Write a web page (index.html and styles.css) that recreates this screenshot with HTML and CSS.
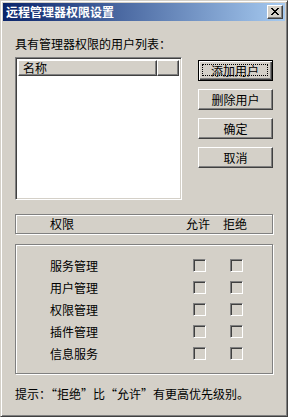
FILE: index.html
```html
<!DOCTYPE html>
<html lang="zh">
<head>
    <meta charset="UTF-8">
    <title>远程管理器权限设置</title>
    <link rel="stylesheet" href="styles.css">
</head>
<body>
    <div class="window">
        <div class="titlebar">
            <span class="title">远程管理器权限设置</span>
            <span class="close">
                <svg width="8" height="7" viewBox="0 0 8 7">
                    <path d="M0 0h2v1h1v1h2v-1h1v-1h2v1h-1v1h-1v1h-1v1h1v1h1v1h1v1h-2v-1h-1v-1h-2v1h-1v1h-2v-1h1v-1h1v-1h1v-1h-1v-1h-1v-1h-1z" fill="#000"/>
                </svg>
            </span>
        </div>

        <div class="content">
            <div class="label">具有管理器权限的用户列表：</div>

            <div class="top-row">
                <!-- 用户列表 -->
                <div class="listview">
                    <div class="list-header">
                        <div class="col col-name">名称</div>
                        <div class="col col-rest"></div>
                    </div>
                </div>

                <!-- 右侧按钮 -->
                <div class="buttons">
                    <div class="btn default"><span class="focus">添加用户</span></div>
                    <div class="btn">删除用户</div>
                    <div class="btn">确定</div>
                    <div class="btn">取消</div>
                </div>
            </div>

            <div class="frame perm-header">
                <span>权限</span>
                <span>允许</span>
                <span>拒绝</span>
            </div>

            <div class="frame perm-list">
                <div class="perm-row"><span>服务管理</span><i class="check"></i><i class="check"></i></div>
                <div class="perm-row"><span>用户管理</span><i class="check"></i><i class="check"></i></div>
                <div class="perm-row"><span>权限管理</span><i class="check"></i><i class="check"></i></div>
                <div class="perm-row"><span>插件管理</span><i class="check"></i><i class="check"></i></div>
                <div class="perm-row"><span>信息服务</span><i class="check"></i><i class="check"></i></div>
            </div>

            <div class="hint">提示：“拒绝”比“允许”有更高优先级别。</div>
        </div>
    </div>
</body>
</html>
```

FILE: styles.css
```css
body {
    margin: 0;
    background-color: #d4d0c8;
    font-family: "Noto Sans CJK SC", "Liberation Sans", sans-serif;
    font-size: 12px;
    color: #000;
}
.window {
    width: 288px;
    height: 417px;
    box-sizing: border-box;
    border: 1px solid;
    border-color: #d4d0c8 #404040 #404040 #d4d0c8;
    box-shadow: inset 1px 1px #fff, inset -1px -1px #808080;
    padding: 2px;
    background: #d4d0c8;
}

/* 标题栏 */
.titlebar {
    height: 18px;
    display: flex;
    align-items: center;
    justify-content: space-between;
    padding: 0 2px 0 3px;
    background: linear-gradient(to right, #0a246a, #a6caf0);
}
.title {
    color: #fff;
    font-weight: bold;
    line-height: 18px;
}
.close {
    width: 16px;
    height: 14px;
    box-sizing: border-box;
    border: 1px solid;
    border-color: #fff #404040 #404040 #fff;
    box-shadow: inset -1px -1px #808080;
    background: #d4d0c8;
    display: flex;
    align-items: center;
    justify-content: center;
    padding: 0 1px 1px 0;
}
.close svg {
    display: block;
}

.content {
    padding: 16px 12px 0 12px;
}
.label {
    line-height: 14px;
}

.top-row {
    display: flex;
    margin-top: 6px;
}
.listview {
    width: 167px;
    height: 143px;
    box-sizing: border-box;
    border: 1px solid;
    border-color: #808080 #fff #fff #808080;
    box-shadow: inset 1px 1px #404040, inset -1px -1px #d4d0c8;
    background: #fff;
    padding: 2px;
}
.list-header {
    display: flex;
    height: 16px;
}
.col {
    box-sizing: border-box;
    height: 16px;
    background: #d4d0c8;
    border: 1px solid;
    border-color: #fff #404040 #404040 #fff;
    box-shadow: inset -1px -1px #808080;
    line-height: 13px;
}
.col-name {
    width: 139px;
    padding-left: 4px;
}
.col-rest {
    flex: 1;
}

.buttons {
    margin-left: 16px;
    margin-top: 3px;
    display: flex;
    flex-direction: column;
    gap: 8px;
}
.btn {
    width: 75px;
    height: 21px;
    box-sizing: border-box;
    border: 1px solid;
    border-color: #fff #404040 #404040 #fff;
    box-shadow: inset -1px -1px #808080;
    display: flex;
    align-items: center;
    justify-content: center;
    padding-bottom: 1px;
}
.btn.default {
    border-color: #000;
    box-shadow: inset 1px 1px #fff, inset -1px -1px #404040, inset -2px -2px #808080;
    padding: 3px 4px 4px 3px;
}
.focus {
    flex: 1;
    align-self: stretch;
    border: 1px dotted #000;
    display: flex;
    align-items: center;
    justify-content: center;
}

/* 权限框 */
.frame {
    box-sizing: border-box;
    width: 258px;
    border: 1px solid #808080;
    box-shadow: inset 1px 1px #fff, 1px 1px #fff;
}
.perm-header {
    margin-top: 14px;
    height: 20px;
    display: grid;
    grid-template-columns: 1fr 24px 24px;
    column-gap: 13px;
    align-items: center;
    padding: 0 25px 1px 34px;
}
.perm-list {
    margin-top: 10px;
    height: 130px;
    padding: 9px 0 0 34px;
}
.perm-row {
    height: 22px;
    display: grid;
    grid-template-columns: 1fr 13px 13px;
    column-gap: 24px;
    align-items: center;
    padding-right: 29px;
}
.check {
    display: block;
    width: 13px;
    height: 13px;
    box-sizing: border-box;
    border: 1px solid;
    border-color: #808080 #fff #fff #808080;
    box-shadow: inset 1px 1px #404040, inset -1px -1px #d4d0c8;
}

.hint {
    margin-top: 13px;
    line-height: 14px;
}
```
